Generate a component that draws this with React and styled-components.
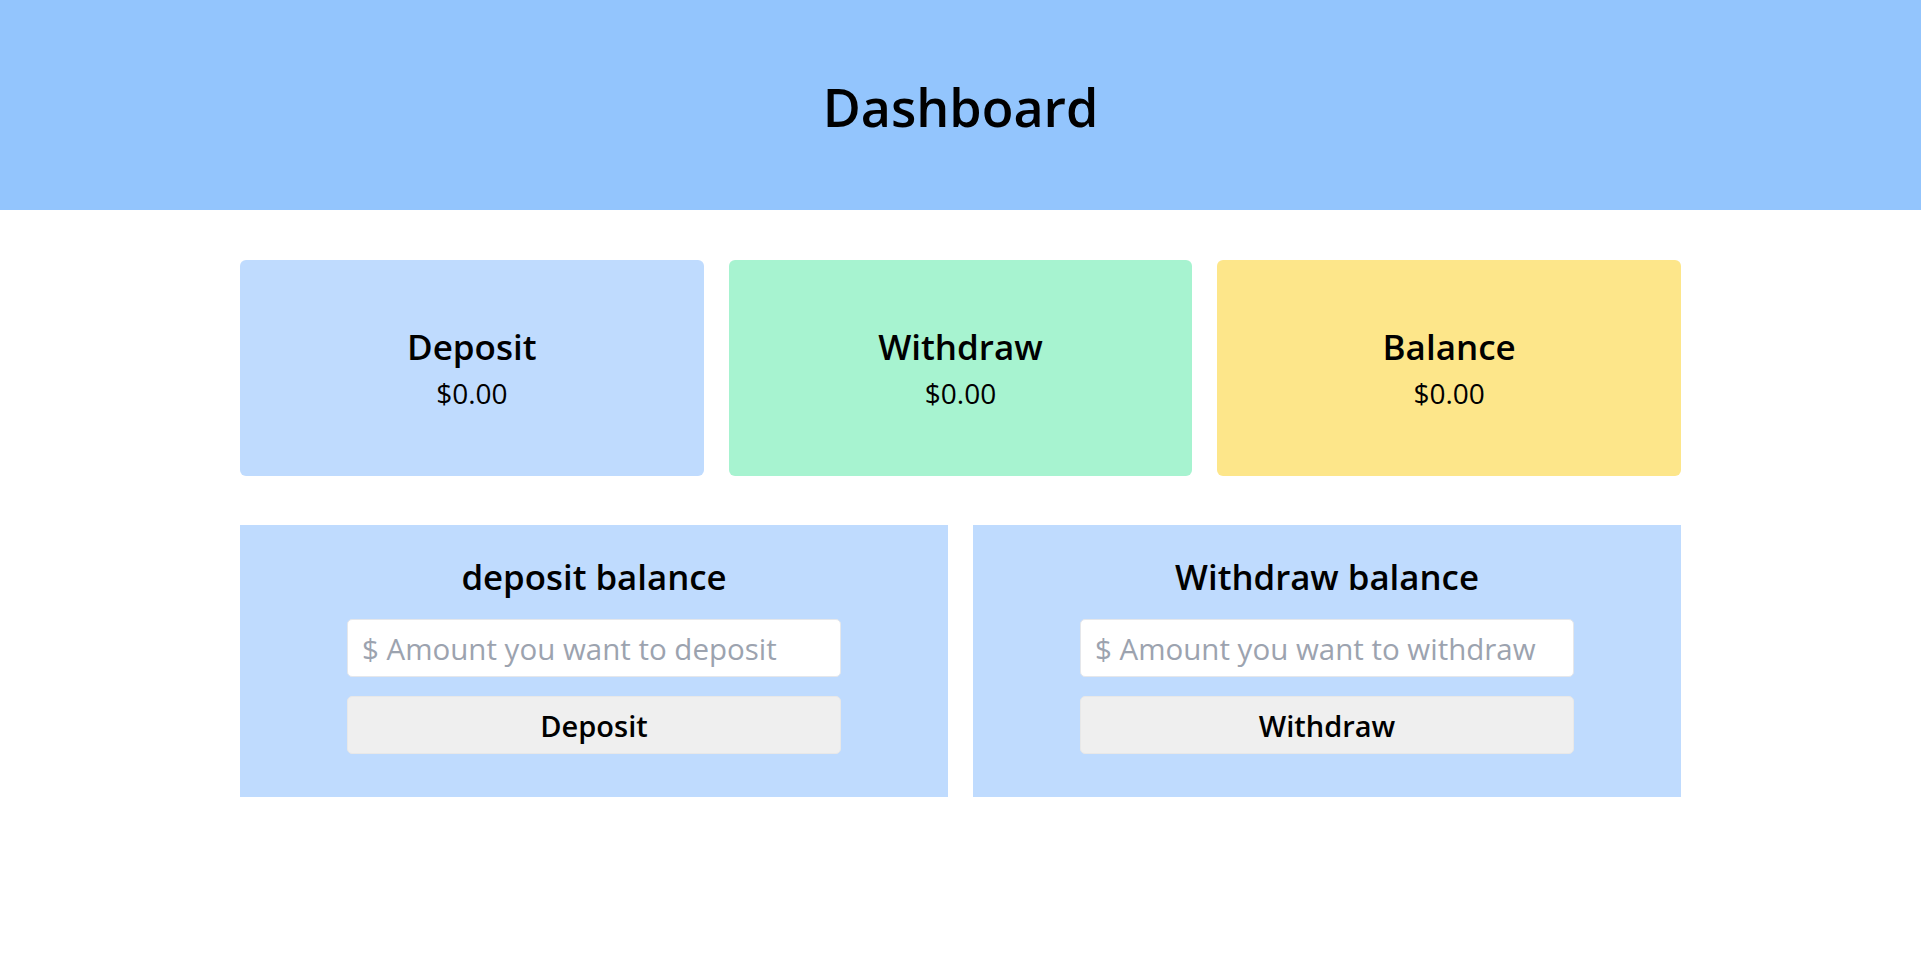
import React, { useState } from "react";
import styled, { createGlobalStyle } from "styled-components";

const GlobalStyle = createGlobalStyle`
  *, *::before, *::after { box-sizing: border-box; }
  html, body { margin: 0; padding: 0; background: #ffffff; }
  body {
    font-family: "Open Sans", "Noto Sans", "Liberation Sans", sans-serif;
    color: #000000;
  }
`;

const Header = styled.header`
  height: 210px;
  background: #93c5fd;
  display: flex;
  align-items: center;
  justify-content: center;
`;

const PageTitle = styled.h1`
  margin: 0;
  font-size: 52px;
  font-weight: 600;
  line-height: 1;
  padding-top: 3px;
`;

const Main = styled.main`
  max-width: 1441px;
  margin: 50px auto 0;
  display: flex;
  flex-direction: column;
  gap: 49px;
`;

const CardsRow = styled.section`
  display: grid;
  grid-template-columns: repeat(3, 1fr);
  gap: 25px;
`;

const StatCard = styled.div`
  height: 216px;
  border-radius: 6px;
  background: ${(p) => p.$bg};
  display: flex;
  flex-direction: column;
  align-items: center;
  justify-content: center;
`;

const StatLabel = styled.h2`
  margin: 0;
  font-size: 35px;
  font-weight: 600;
  line-height: 45px;
`;

const StatValue = styled.p`
  margin: 4px 0 0;
  font-size: 28px;
  font-weight: 400;
  line-height: 40px;
`;

const PanelsRow = styled.section`
  display: grid;
  grid-template-columns: repeat(2, 1fr);
  gap: 25px;
`;

const Panel = styled.form`
  background: #bfdbfe;
  padding: 29px 0 43px;
  display: flex;
  flex-direction: column;
  align-items: center;
`;

const PanelTitle = styled.h3`
  margin: 0 0 20px;
  font-size: 34.8px;
  font-weight: 600;
  line-height: 45px;
`;

const AmountInput = styled.input`
  width: 494px;
  height: 58px;
  padding: 0 14px;
  border: 1px solid #e5e7eb;
  border-radius: 5px;
  background: #ffffff;
  font-family: inherit;
  font-size: 29.5px;
  color: #111827;
  outline: none;
  &::placeholder { color: #9ca3af; }
`;

const ActionButton = styled.button`
  margin-top: 19px;
  width: 494px;
  height: 58px;
  border: 1px solid #e8e8e8;
  border-radius: 5px;
  background: #efefef;
  font-family: inherit;
  font-size: 29px;
  font-weight: 600;
  color: #000000;
  cursor: pointer;
`;

const stats = [
  { label: "Deposit", bg: "#bfdbfe" },
  { label: "Withdraw", bg: "#a7f3d0" },
  { label: "Balance", bg: "#fde68a" },
];

export default function App() {
  const [dep, setDep] = useState("");
  const [wd, setWd] = useState("");
  return (
    <>
      <GlobalStyle />
      <Header>
        <PageTitle>Dashboard</PageTitle>
      </Header>
      <Main>
        <CardsRow>
          {stats.map((s) => (
            <StatCard key={s.label} $bg={s.bg}>
              <StatLabel>{s.label}</StatLabel>
              <StatValue>$0.00</StatValue>
            </StatCard>
          ))}
        </CardsRow>
        <PanelsRow>
          <Panel onSubmit={(e) => e.preventDefault()}>
            <PanelTitle>deposit balance</PanelTitle>
            <AmountInput
              type="number"
              placeholder="$ Amount you want to deposit"
              value={dep}
              onChange={(e) => setDep(e.target.value)}
            />
            <ActionButton type="submit">Deposit</ActionButton>
          </Panel>
          <Panel onSubmit={(e) => e.preventDefault()}>
            <PanelTitle>Withdraw balance</PanelTitle>
            <AmountInput
              type="number"
              placeholder="$ Amount you want to withdraw"
              value={wd}
              onChange={(e) => setWd(e.target.value)}
            />
            <ActionButton type="submit">Withdraw</ActionButton>
          </Panel>
        </PanelsRow>
      </Main>
    </>
  );
}
